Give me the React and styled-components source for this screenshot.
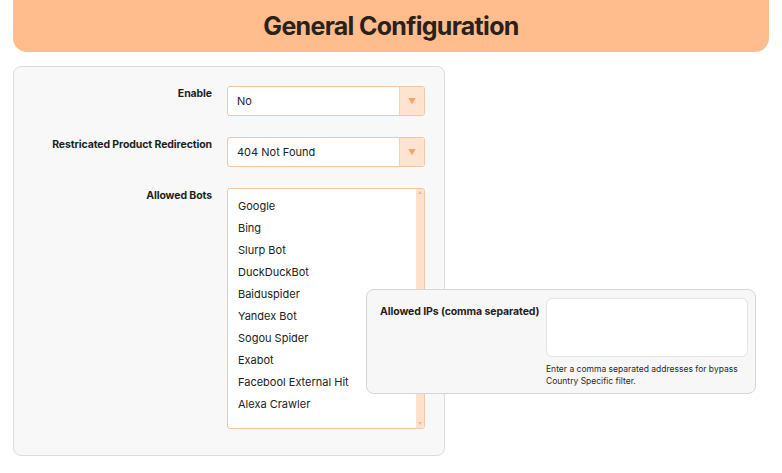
import React from 'react'
import styled, { createGlobalStyle } from 'styled-components'

const GlobalStyle = createGlobalStyle`
  body {
    margin: 0;
    background: #ffffff;
    font-family: Inter, "Liberation Sans", sans-serif;
    color: #222;
  }
`

const bots = [
  'Google',
  'Bing',
  'Slurp Bot',
  'DuckDuckBot',
  'Baiduspider',
  'Yandex Bot',
  'Sogou Spider',
  'Exabot',
  'Facebool External Hit',
  'Alexa Crawler',
]

export default function App() {
  return (
    <Page>
      <GlobalStyle />
      <Header>General Configuration</Header>
      <Card>
        <Row>
          <Label>Enable</Label>
          <Select>
            <SelectValue>No</SelectValue>
            <Arrow>▼</Arrow>
          </Select>
        </Row>
        <Row>
          <Label>Restricated Product Redirection</Label>
          <Select>
            <SelectValue>404 Not Found</SelectValue>
            <Arrow>▼</Arrow>
          </Select>
        </Row>
        <Row>
          <Label>Allowed Bots</Label>
          <ListBox>
            <Items>
              {bots.map((b) => (
                <Item key={b}>{b}</Item>
              ))}
            </Items>
            <Track>
              <TrackArrow>▲</TrackArrow>
              <TrackArrow>▼</TrackArrow>
            </Track>
          </ListBox>
        </Row>
      </Card>
      <Popup>
        <PopupLabel>Allowed IPs (comma separated)</PopupLabel>
        <PopupField>
          <TextArea />
          <Help>
            Enter a comma separated addresses for bypass
            <br />
            Country Specific filter.
          </Help>
        </PopupField>
      </Popup>
    </Page>
  )
}

const Page = styled.div`
  position: relative;
  width: 782px;
  height: 473px;
  padding: 0 13px;
  box-sizing: border-box;
`

const Header = styled.h1`
  margin: 0;
  height: 52px;
  background: #ffbc8c;
  border-radius: 0 0 14px 14px;
  display: flex;
  align-items: center;
  justify-content: center;
  font-size: 25px;
  font-weight: 700;
  letter-spacing: -0.7px;
  color: #2a211b;
`

const Card = styled.div`
  margin-top: 14px;
  width: 432px;
  height: 390px;
  box-sizing: border-box;
  background: #f8f8f8;
  border: 1px solid #dcdcdc;
  border-radius: 8px;
  padding: 19px 19px 0 0;
  display: flex;
  flex-direction: column;
  gap: 21px;
`

const Row = styled.div`
  display: grid;
  grid-template-columns: 198px 198px;
  column-gap: 15px;
`

const Label = styled.div`
  text-align: right;
  font-size: 10.5px;
  font-weight: 700;
  color: #1f1f1f;
  padding-top: 1px;
  letter-spacing: -0.1px;
`

const Select = styled.div`
  height: 30px;
  box-sizing: border-box;
  background: #fff;
  border: 1px solid #f1c8a6;
  border-radius: 3px;
  display: flex;
  overflow: hidden;
`

const SelectValue = styled.div`
  flex: 1;
  display: flex;
  align-items: center;
  padding-left: 9px;
  font-size: 11px;
  color: #222;
`

const Arrow = styled.div`
  width: 24px;
  background: #fee3d0;
  border-left: 1px solid #f5d3b8;
  display: flex;
  align-items: center;
  justify-content: center;
  color: #f5a56b;
  font-size: 8px;
`

const ListBox = styled.div`
  height: 241px;
  box-sizing: border-box;
  background: #fff;
  border: 1px solid #f1c8a6;
  border-radius: 3px;
  display: flex;
  overflow: hidden;
`

const Items = styled.div`
  flex: 1;
  padding: 11px 0 0 10px;
  display: flex;
  flex-direction: column;
`

const Item = styled.div`
  height: 22px;
  line-height: 13px;
  font-size: 11px;
  color: #222;
`

const Track = styled.div`
  width: 8px;
  background: #fee0cb;
  display: flex;
  flex-direction: column;
  justify-content: space-between;
  align-items: center;
  padding: 2px 0;
`

const TrackArrow = styled.span`
  font-size: 4px;
  color: #e9b894;
  line-height: 4px;
`

const Popup = styled.div`
  position: absolute;
  left: 366px;
  top: 289px;
  width: 390px;
  height: 105px;
  box-sizing: border-box;
  background: #f7f7f7;
  border: 1px solid #d6d6d6;
  border-radius: 8px;
  padding: 8px 7px 0 13px;
  display: grid;
  grid-template-columns: 166px 1fr;
`

const PopupLabel = styled.div`
  font-size: 10.5px;
  font-weight: 700;
  color: #1f1f1f;
  padding-top: 7px;
  letter-spacing: -0.1px;
`

const PopupField = styled.div`
  display: flex;
  flex-direction: column;
`

const TextArea = styled.div`
  height: 59px;
  box-sizing: border-box;
  background: #fff;
  border: 1px solid #e3e3e3;
  border-radius: 6px;
`

const Help = styled.div`
  margin-top: 6px;
  font-size: 8.5px;
  line-height: 12px;
  color: #2a2a2a;
`
